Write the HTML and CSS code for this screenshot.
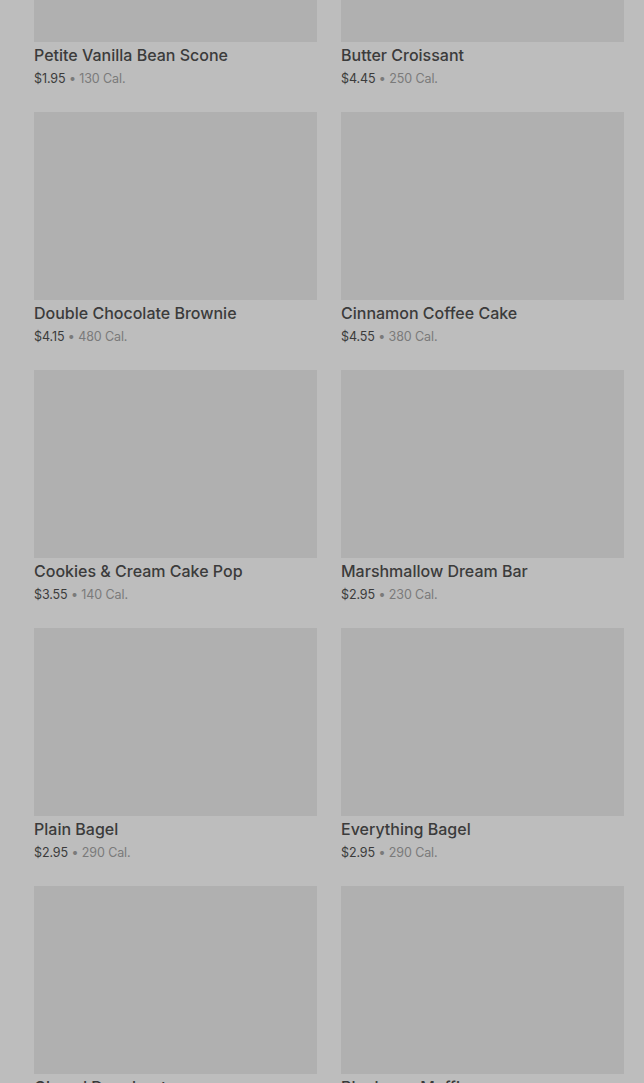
FILE: index.html
```html
<!DOCTYPE html>
<html lang="en">
<head>
<meta charset="utf-8">
<title>Bakery</title>
<link rel="stylesheet" href="styles.css">
</head>
<body>
<main class="grid">
  <article class="card"><div class="thumb"></div><h3 class="name">Petite Vanilla Bean Scone</h3><p class="meta"><span class="price">$1.95</span> • 130 Cal.</p></article>
  <article class="card"><div class="thumb"></div><h3 class="name">Butter Croissant</h3><p class="meta"><span class="price">$4.45</span> • 250 Cal.</p></article>
  <article class="card"><div class="thumb"></div><h3 class="name">Double Chocolate Brownie</h3><p class="meta"><span class="price">$4.15</span> • 480 Cal.</p></article>
  <article class="card"><div class="thumb"></div><h3 class="name">Cinnamon Coffee Cake</h3><p class="meta"><span class="price">$4.55</span> • 380 Cal.</p></article>
  <article class="card"><div class="thumb"></div><h3 class="name">Cookies &amp; Cream Cake Pop</h3><p class="meta"><span class="price">$3.55</span> • 140 Cal.</p></article>
  <article class="card"><div class="thumb"></div><h3 class="name">Marshmallow Dream Bar</h3><p class="meta"><span class="price">$2.95</span> • 230 Cal.</p></article>
  <article class="card"><div class="thumb"></div><h3 class="name">Plain Bagel</h3><p class="meta"><span class="price">$2.95</span> • 290 Cal.</p></article>
  <article class="card"><div class="thumb"></div><h3 class="name">Everything Bagel</h3><p class="meta"><span class="price">$2.95</span> • 290 Cal.</p></article>
  <article class="card"><div class="thumb"></div><h3 class="name">Glazed Doughnut</h3><p class="meta"><span class="price">$2.45</span> • 480 Cal.</p></article>
  <article class="card"><div class="thumb"></div><h3 class="name">Blueberry Muffin</h3><p class="meta"><span class="price">$3.25</span> • 360 Cal.</p></article>
</main>
</body>
</html>
```

FILE: styles.css
```css
html, body {
  margin: 0;
  padding: 0;
  background: #bdbdbd;
  overflow: hidden;
  height: 1083px;
}
body {
  font-family: "Inter", "Roboto", "Liberation Sans", sans-serif;
  color: #3a3a3a;
}
.grid {
  display: grid;
  grid-template-columns: 283px 283px;
  column-gap: 24px;
  padding: 0 20px 0 34px;
  margin-top: -146px;
}
.card {
  display: flex;
  flex-direction: column;
  height: 258px;
}
.thumb {
  height: 188px;
  background: #b0b0b0;
}
.name {
  margin: 0;
  font-size: 16px;
  font-weight: 500;
  line-height: 24px;
  color: #3b3b3b;
  margin-top: 1px;
}
.meta {
  margin: 1px 0 0;
  font-size: 12.5px;
  line-height: 22px;
  color: #7a7a7a;
  letter-spacing: -0.1px;
}
.price {
  color: #3b3b3b;
}
```
